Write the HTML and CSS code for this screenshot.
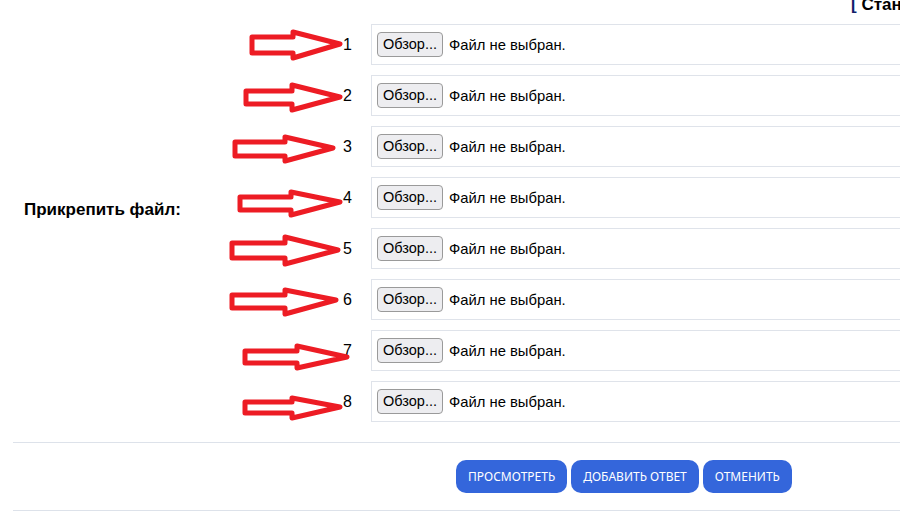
FILE: index.html
```html
<!DOCTYPE html>
<html lang="ru">
<head>
  <meta charset="UTF-8">
  <title>Прикрепить файл</title>
  <link rel="stylesheet" href="styles.css">
</head>
<body>

  <!-- верхняя строка -->
  <div class="topbar"><span class="bracket">[</span> Стандартный режим ]</div>

  <div class="form">
    <div class="attach">
      <div class="label">Прикрепить файл:</div>
      <div class="files" id="files"></div>
    </div>

    <div class="buttons">
      <button>Просмотреть</button>
      <button>Добавить ответ</button>
      <button>Отменить</button>
    </div>
  </div>

  <script>
    // стрелки нарисованы от руки, у каждой свои координаты
    const arrows = [
      [252, 37, 53, 293, 32, 58, 340, 44],
      [246, 91, 104, 292, 85, 110, 340, 97],
      [235, 142, 156, 285, 137, 161, 333, 148],
      [240, 197, 210, 291, 192, 215, 340, 202],
      [232, 243, 258, 285, 237, 264, 338, 250],
      [232, 295, 308, 285, 290, 314, 336, 300],
      [245, 351, 363, 297, 346, 368, 347, 357],
      [245, 402, 413, 292, 398, 418, 340, 407]
    ];
    const files = document.getElementById('files');
    arrows.forEach((a, i) => {
      const row = document.createElement('div');
      row.className = 'row';
      const top = 24 + i * 51;
      const [x0, s1, s2, hx, h1, h2, tx, ty] = a.map((v, k) => (k === 0 || k === 3 || k === 6) ? v : v - top);
      row.innerHTML = `
        <svg class="arrow" width="130" height="41" viewBox="220 0 130 41">
          <polygon points="${x0},${s1} ${hx},${s1} ${hx},${h1} ${tx},${ty} ${hx},${h2} ${hx},${s2} ${x0},${s2}"
                   fill="none" stroke="#ed1c24" stroke-width="5" stroke-linejoin="round"/>
        </svg>
        <span class="num">${i + 1}</span>
        <div class="box">
          <span class="browse">Обзор...</span>
          <span class="status">Файл не выбран.</span>
        </div>`;
      files.appendChild(row);
    });
  </script>

</body>
</html>
```

FILE: styles.css
```css
* {
  box-sizing: border-box;
}

html, body {
  overflow: hidden;
}

body {
  font-family: 'Liberation Sans', Arial, sans-serif;
  margin: 0;
  padding: 0;
  background-color: #fff;
  color: #000;
  width: 900px;
}

.topbar {
  height: 27px;
  padding-left: 851px;
  margin-top: -3px;
  font-size: 17px;
  font-weight: bold;
  line-height: 16px;
  white-space: nowrap;
  overflow: hidden;
}

.bracket {
  color: #10206a;
}

.form {
  padding-left: 13px;
}

.attach {
  display: flex;
}

.label {
  width: 330px;
  padding-left: 11px;
  padding-bottom: 26px;
  display: flex;
  align-items: center;
  font-size: 17px;
  font-weight: bold;
}

.files {
  flex: 1;
  display: flex;
  flex-direction: column;
  gap: 10px;
}

.row {
  position: relative;
  display: flex;
  align-items: center;
  height: 41px;
}

/* стрелка лежит поверх колонки подписи */
.arrow {
  position: absolute;
  left: -123px;
  top: 0;
}

.num {
  width: 28px;
  font-size: 16px;
  padding-top: 1px;
}

.box {
  flex: 1;
  height: 41px;
  margin-right: -20px;
  border: 1px solid #dfe3ea;
  display: flex;
  align-items: center;
  padding-left: 5px;
  font-size: 14.8px;
}

.browse {
  display: inline-block;
  height: 25px;
  line-height: 23px;
  padding: 0 5px;
  margin-right: 6px;
  border: 1px solid #9a9a9a;
  border-radius: 4px;
  background-color: #ededf0;
  font-size: 14.5px;
}

.buttons {
  margin-top: 20px;
  border-top: 1px solid #dde2ea;
  border-bottom: 1px solid #dde2ea;
  height: 69px;
  display: flex;
  align-items: center;
  gap: 4px;
  padding-left: 443px;
  margin-right: -20px;
}

.buttons button {
  height: 33px;
  padding: 0 12px;
  border: none;
  border-radius: 10px;
  background-color: #3466db;
  color: #fff;
  font-family: 'Noto Sans', 'Open Sans', sans-serif;
  font-size: 12px;
  text-transform: uppercase;
  cursor: pointer;
}
```
